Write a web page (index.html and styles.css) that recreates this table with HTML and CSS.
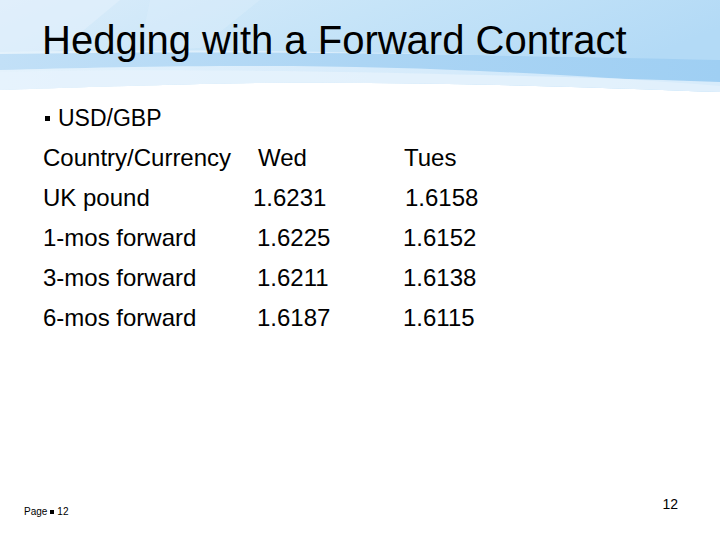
FILE: index.html
```html
<!DOCTYPE html>
<html lang="en">
<head>
<meta charset="utf-8">
<title>Hedging with a Forward Contract</title>
<link rel="stylesheet" href="styles.css">
</head>
<body>
<div class="slide">
  <header class="head">
    <svg class="head-bg" viewBox="0 0 720 100" preserveAspectRatio="none" aria-hidden="true">
      <defs>
        <linearGradient id="sky" x1="0" y1="0" x2="1" y2="0.3">
          <stop offset="0" stop-color="#dcedfa"/>
          <stop offset="0.5" stop-color="#c6e4f8"/>
          <stop offset="1" stop-color="#b3daf6"/>
        </linearGradient>
        <linearGradient id="band" x1="0" y1="0" x2="1" y2="0">
          <stop offset="0" stop-color="#c2e0f7"/>
          <stop offset="0.5" stop-color="#acd5f4"/>
          <stop offset="1" stop-color="#9fcff3"/>
        </linearGradient>
        <linearGradient id="low" x1="0" y1="0" x2="1" y2="0">
          <stop offset="0" stop-color="#e4f2fc"/>
          <stop offset="0.6" stop-color="#d6ebfb"/>
          <stop offset="1" stop-color="#cbe6fa"/>
        </linearGradient>
      </defs>
      <path d="M0 0 H720 V92 C560 86 380 80 200 84 C120 86 50 88 0 90 Z" fill="url(#sky)"/>
      <path d="M0 0 H120 L60 50 C40 52 20 54 0 56 Z" fill="#e2f0fb" opacity="0.6"/>
      <path d="M150 0 H260 L200 48 C180 49 160 50 140 50 Z" fill="#dbedfa" opacity="0.45"/>
      <path d="M0 52 C200 48 420 52 720 62 V92 C560 86 380 80 200 84 C120 86 50 88 0 90 Z" fill="url(#low)"/>
      <path d="M0 54 C220 50 440 54 720 60 V86 C560 74 420 66 260 66 C160 66 70 68 0 70 Z" fill="url(#band)"/>
      <path d="M0 72 C160 68 360 70 720 82 V92 C560 86 380 80 200 84 C120 86 50 88 0 90 Z" fill="#e6f3fc" opacity="0.8"/>
    </svg>
    <h1 class="title">Hedging with a Forward Contract</h1>
  </header>

  <main class="body">
    <div class="bullet"><span class="bullet-mark"></span>USD/GBP</div>
    <div class="rates">
      <div class="cell">Country/Currency</div><div class="cell c2 hdr">Wed</div><div class="cell c3 hdr">Tues</div>
      <div class="cell">UK pound</div><div class="cell c2 shift">1.6231</div><div class="cell c3 shift3">1.6158</div>
      <div class="cell">1-mos forward</div><div class="cell c2">1.6225</div><div class="cell c3">1.6152</div>
      <div class="cell">3-mos forward</div><div class="cell c2">1.6211</div><div class="cell c3">1.6138</div>
      <div class="cell">6-mos forward</div><div class="cell c2">1.6187</div><div class="cell c3">1.6115</div>
    </div>
  </main>

  <footer class="foot">
    <div class="foot-left">Page <span class="foot-mark"></span> 12</div>
    <div class="foot-right">12</div>
  </footer>
</div>
</body>
</html>
```

FILE: styles.css
```css
html, body {
  margin: 0;
  padding: 0;
  background: #ffffff;
}

body {
  font-family: "Liberation Sans", Arial, sans-serif;
  color: #000000;
}

.slide {
  width: 720px;
  height: 540px;
  display: flex;
  flex-direction: column;
  overflow: hidden;
}

.head {
  position: relative;
  height: 98px;
  flex: none;
}

.head-bg {
  position: absolute;
  left: 0;
  top: 0;
  width: 720px;
  height: 100px;
  z-index: 0;
}

.title {
  position: relative;
  z-index: 1;
  margin: 0;
  padding: 17px 0 0 42px;
  font-size: 40px;
  line-height: 46px;
  font-weight: normal;
}

.body {
  flex: 1;
  padding-left: 43px;
}

.bullet {
  display: flex;
  align-items: center;
  font-size: 23px;
  line-height: 40px;
  height: 40px;
  margin-left: 2px;
}

.bullet-mark {
  width: 5px;
  height: 5px;
  background: #000;
  margin-right: 8px;
  margin-top: 1px;
}

.rates {
  display: grid;
  grid-template-columns: 214px 146px auto;
  font-size: 24px;
  line-height: 40px;
}

.c2.hdr { margin-left: 1px; }
.c3.hdr { margin-left: 1px; }
.shift { margin-left: -4px; }
.shift3 { margin-left: 2px; }

.foot {
  flex: none;
  height: 44px;
  display: flex;
  justify-content: space-between;
  align-items: flex-start;
  padding: 0 42px 0 24px;
}

.foot-left {
  margin-top: 10px;
  font-size: 10px;
  line-height: 12px;
  display: flex;
  align-items: center;
  gap: 3px;
}

.foot-mark {
  width: 4px;
  height: 4px;
  background: #000;
}

.foot-right {
  font-size: 14px;
  line-height: 16px;
}
```
